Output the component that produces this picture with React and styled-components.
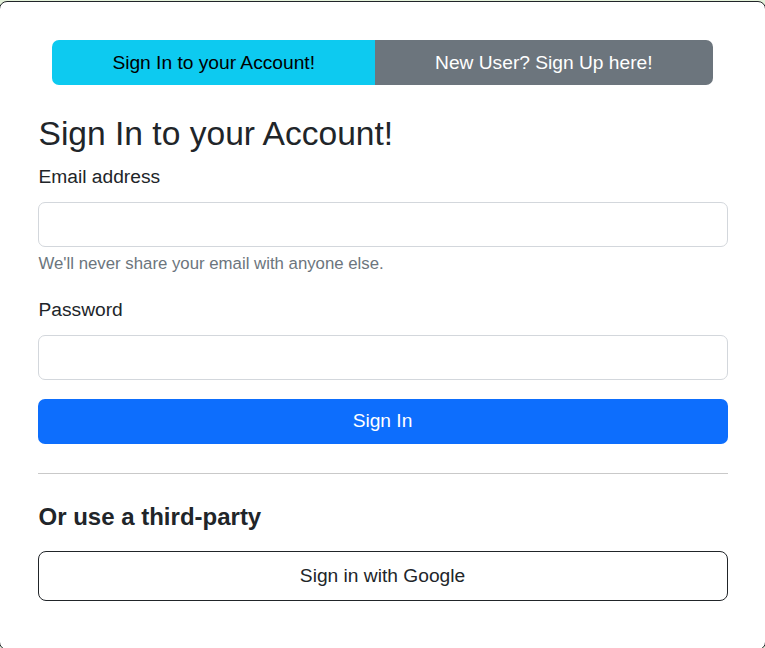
import React from 'react'
import styled, { createGlobalStyle } from 'styled-components'

const GlobalStyle = createGlobalStyle`
  html, body {
    margin: 0;
    padding: 0;
    background: #e4f2da;
    overflow: hidden;
  }
  * {
    box-sizing: border-box;
  }
  body {
    font-family: "Liberation Sans", Arial, Helvetica, sans-serif;
    color: #212529;
  }
`;

const Card = styled.div`
  margin: 1px -1px 0 -1px;
  height: 649px;
  background: #fff;
  border: 1px solid #212529;
  border-radius: 8px;
  padding-top: 38px;
`;

const Container = styled.div`
  width: 690px;
  margin: 0 auto;
`;

const Tabs = styled.div`
  display: flex;
  justify-content: center;
`;

const Tab = styled.button`
  border: none;
  margin: 0;
  padding: 8px 60px;
  font-family: inherit;
  font-size: 19.2px;
  line-height: 29px;
  cursor: pointer;
  background: ${p => (p.$active ? '#0dcaf0' : '#6c757d')};
  color: ${p => (p.$active ? '#000' : '#fff')};
  border-radius: ${p => (p.$first ? '7px 0 0 7px' : '0 7px 7px 0')};
`;

const Title = styled.h2`
  margin: 29px 0 9.5px 1px;
  font-size: 33.6px;
  font-weight: 400;
  line-height: 39.6px;
`;

const Group = styled.div`
  margin-bottom: 20px;
`;

const Label = styled.label`
  display: block;
  padding-left: 1px;
  font-size: 19.2px;
  line-height: 28.5px;
  margin-bottom: 10.5px;
`;

const Input = styled.input`
  display: block;
  width: 100%;
  height: 45px;
  padding: 0 14px;
  font-family: inherit;
  font-size: 19px;
  border: 1px solid #d3d7dc;
  border-radius: 7px;
  outline: none;
`;

const Help = styled.div`
  margin-top: 4px;
  padding-left: 1px;
  font-size: 16.8px;
  line-height: 25px;
  color: #6c757d;
`;

const PrimaryButton = styled.button`
  display: block;
  width: 100%;
  height: 45px;
  margin-top: -1px;
  padding: 0 0 2px;
  border: none;
  border-radius: 7px;
  background: #0d6efd;
  color: #fff;
  font-family: inherit;
  font-size: 19.2px;
  cursor: pointer;
`;

const Divider = styled.hr`
  margin: 28.5px 0;
  border: 0;
  border-top: 1px solid #c9c9c9;
`;

const SubTitle = styled.h4`
  margin: 0 0 19px 1px;
  padding-top: 1px;
  font-size: 24px;
  font-weight: 700;
  line-height: 28.5px;
`;

const OutlineButton = styled.button`
  display: block;
  width: 100%;
  height: 50px;
  border: 1px solid #212529;
  border-radius: 8px;
  background: #fff;
  color: #212529;
  font-family: inherit;
  font-size: 19.2px;
  cursor: pointer;
`;

export default function App() {
  return (
    <>
      <GlobalStyle />
      <Card>
        <Container>
          <Tabs>
            <Tab $active $first>Sign In to your Account!</Tab>
            <Tab>New User? Sign Up here!</Tab>
          </Tabs>
          <Title>Sign In to your Account!</Title>
          <Group>
            <Label htmlFor="email">Email address</Label>
            <Input id="email" type="email" />
            <Help>We'll never share your email with anyone else.</Help>
          </Group>
          <Group>
            <Label htmlFor="password">Password</Label>
            <Input id="password" type="password" />
          </Group>
          <PrimaryButton>Sign In</PrimaryButton>
          <Divider />
          <SubTitle>Or use a third-party</SubTitle>
          <OutlineButton>Sign in with Google</OutlineButton>
        </Container>
      </Card>
    </>
  )
}
